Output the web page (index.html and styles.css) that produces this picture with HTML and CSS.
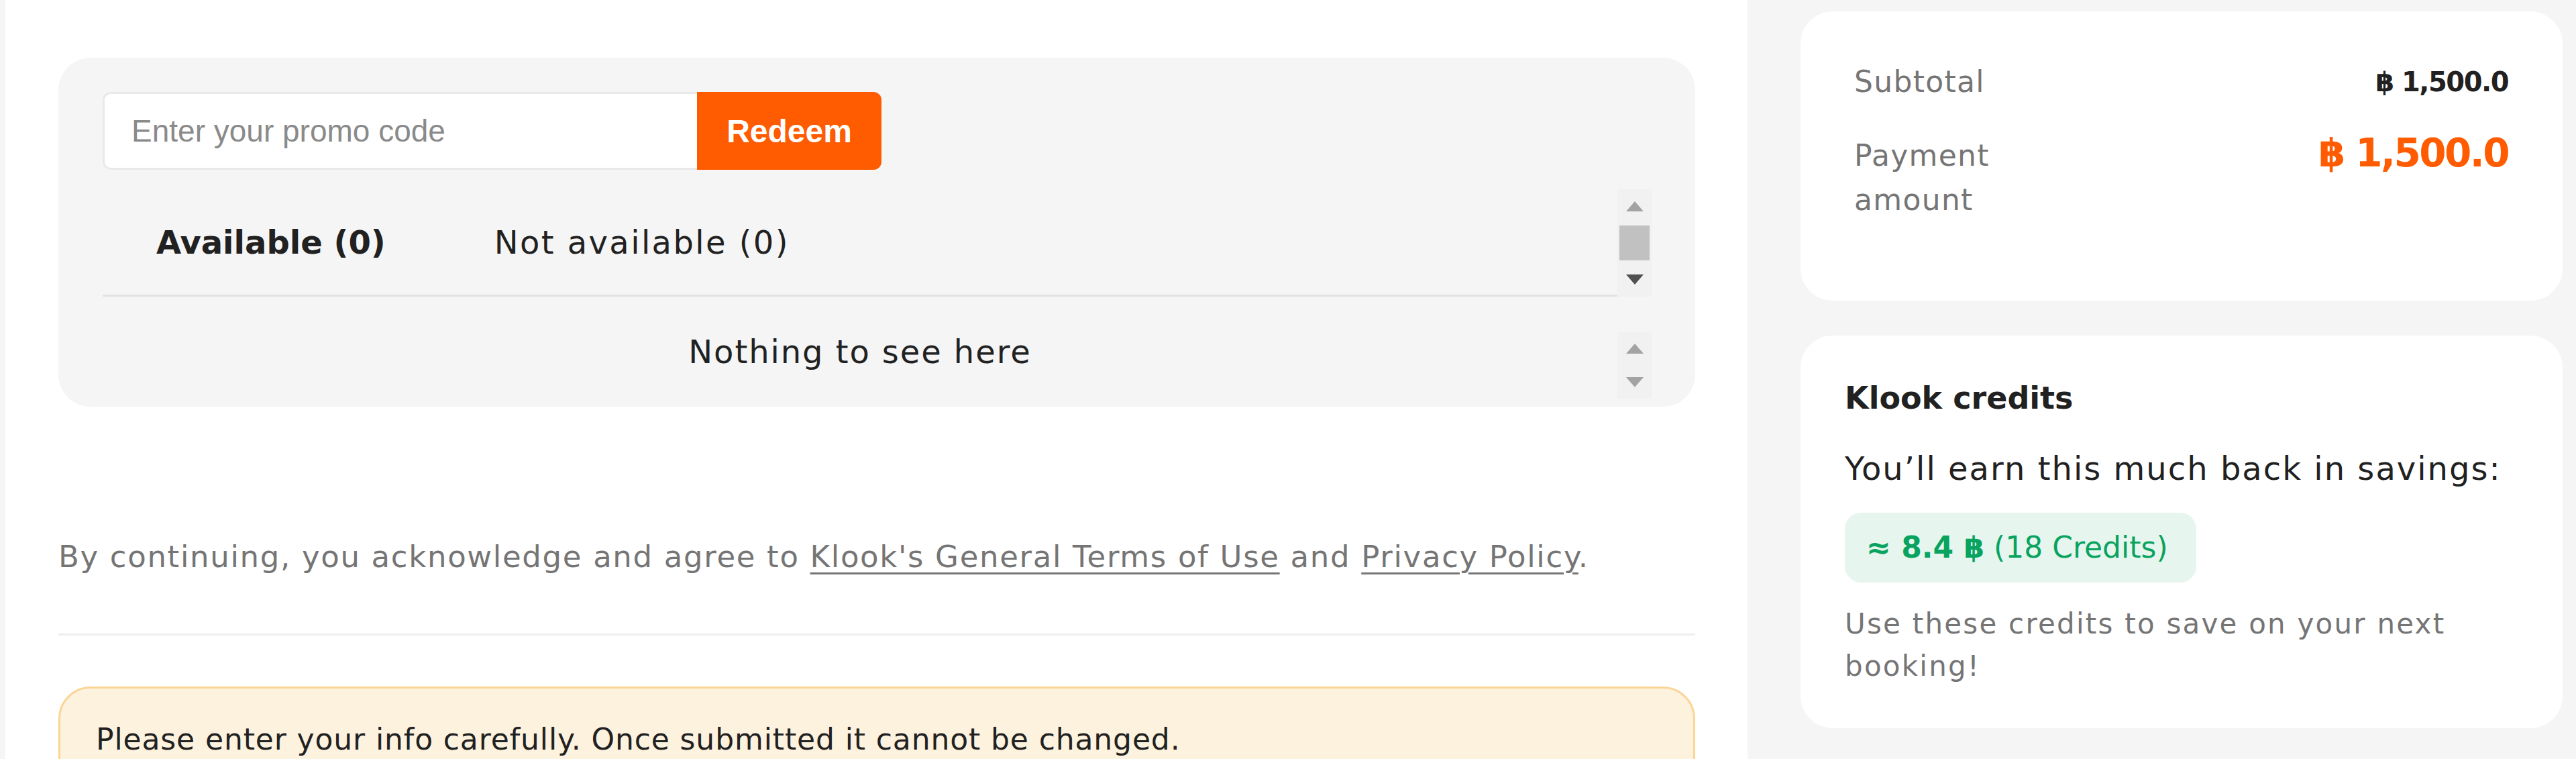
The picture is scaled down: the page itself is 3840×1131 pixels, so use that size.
FILE: index.html
```html
<!DOCTYPE html>
<html lang="en">
<head>
<meta charset="utf-8">
<title>Checkout</title>
<link rel="stylesheet" href="styles.css">
</head>
<body>
<div class="page">
  <main class="main">
    <section class="promo">
      <div class="promo-form">
        <input class="promo-input" type="text" placeholder="Enter your promo code">
        <button class="redeem" type="button">Redeem</button>
      </div>
      <div class="scrollbox tabs-box">
        <div class="tabs">
          <div class="tab tab-active">Available (0)</div>
          <div class="tab">Not available (0)</div>
        </div>
        <div class="sbar">
          <span class="sbtn"><span class="arr arr-up"></span></span>
          <span class="thumb"></span>
          <span class="sbtn"><span class="arr arr-down arr-dark"></span></span>
        </div>
      </div>
      <div class="scrollbox empty-box">
        <div class="empty">Nothing to see here</div>
        <div class="sbar">
          <span class="sbtn"><span class="arr arr-up"></span></span>
          <span class="sgap"></span>
          <span class="sbtn"><span class="arr arr-down"></span></span>
        </div>
      </div>
    </section>

    <p class="terms">By continuing, you acknowledge and agree to <a href="#" class="link">Klook's General Terms of Use</a> and <a href="#" class="link">Privacy Policy</a>.</p>

    <div class="divider"></div>

    <div class="notice">Please enter your info carefully. Once submitted it cannot be changed.</div>
  </main>

  <aside class="side">
    <div class="card price-card">
      <div class="row">
        <div class="label">Subtotal</div>
        <div class="value">฿ 1,500.0</div>
      </div>
      <div class="row row-pay">
        <div class="label label-pay">Payment amount</div>
        <div class="value value-pay">฿ 1,500.0</div>
      </div>
    </div>

    <div class="card credits-card">
      <div class="credits-title">Klook credits</div>
      <div class="credits-earn">You’ll earn this much back in savings:</div>
      <div class="pill"><span class="pill-strong">≈ 8.4 ฿</span> (18 Credits)</div>
      <div class="credits-note">Use these credits to save on your next<br>booking!</div>
    </div>
  </aside>
</div>
</body>
</html>
```

FILE: styles.css
```css
* { box-sizing: border-box; }

html, body {
  margin: 0;
  padding: 0;
}

body {
  background: #f5f5f5;
  font-family: "DejaVu Sans", "Open Sans", sans-serif;
  color: #212121;
  overflow: hidden;
}

.page {
  display: flex;
  align-items: flex-start;
  height: 1131px;
  overflow: hidden;
}

/* ---------- main column ---------- */
.main {
  margin-left: 8px;
  width: 2597px;
  min-height: 1131px;
  background: #ffffff;
  padding: 86px 78px 0 79px;
}

.promo {
  background: #f5f5f5;
  border-radius: 48px;
  padding: 51px 65px 12px 66px;
}

.promo-form {
  display: flex;
  height: 116px;
}

.promo-input {
  width: 886px;
  height: 116px;
  border: 3px solid #e9e9e9;
  border-right: none;
  border-radius: 12px 0 0 12px;
  background: #ffffff;
  padding: 0 0 0 40px;
  font-family: "Liberation Sans", Arial, sans-serif;
  font-size: 46px;
  color: #212121;
  outline: none;
}

.promo-input::placeholder {
  color: #8a8a8a;
}

.redeem {
  width: 275px;
  height: 116px;
  border: none;
  border-radius: 0 12px 12px 0;
  background: #ff5b00;
  color: #ffffff;
  font-family: "Liberation Sans", Arial, sans-serif;
  font-weight: 700;
  font-size: 48px;
  padding: 0;
}

.scrollbox {
  display: flex;
}

.tabs-box {
  margin-top: 29px;
  height: 160px;
}

.tabs {
  flex: 1;
  display: flex;
  align-items: center;
  border-bottom: 3px solid #e2e2e2;
}

.tab {
  padding: 0 82px 0 80px;
  font-size: 48px;
  letter-spacing: 0.05em;
  color: #212121;
  white-space: nowrap;
}

.tab-active {
  font-weight: 700;
  letter-spacing: 0;
}

.empty-box {
  margin-top: 52px;
  height: 100px;
}

.empty {
  flex: 1;
  text-align: center;
  font-size: 48px;
  line-height: 60px;
  letter-spacing: 0.04em;
  color: #212121;
}

/* classic scrollbar look */
.sbar {
  width: 51px;
  background: #f1f1f1;
  display: flex;
  flex-direction: column;
}

.sbtn {
  height: 51px;
  display: flex;
  align-items: center;
  justify-content: center;
}

.sgap { flex: 1; }

.thumb {
  flex: 1;
  margin: 3px 3px;
  background: #c1c1c1;
}

.arr {
  width: 0;
  height: 0;
  border-left: 13px solid transparent;
  border-right: 13px solid transparent;
}

.arr-up {
  border-bottom: 15px solid #a3a3a3;
}

.arr-down {
  border-top: 15px solid #a3a3a3;
}

.arr-dark {
  border-top-color: #505050;
}

.terms {
  margin: 192px 0 0;
  font-size: 45px;
  line-height: 63px;
  letter-spacing: 0.037em;
  color: #757575;
}

.link {
  color: #757575;
  text-decoration: underline;
  text-decoration-thickness: 3px;
  text-underline-offset: 8px;
}

.divider {
  margin-top: 83px;
  height: 3px;
  background: #eeeeee;
}

.notice {
  margin-top: 76px;
  background: #fdf2de;
  border: 3px solid #fbd596;
  border-radius: 48px;
  padding: 44px 50px 60px 53px;
  font-size: 44px;
  line-height: 63px;
  letter-spacing: 0.02em;
  color: #212121;
}

/* ---------- side column ---------- */
.side {
  flex: 1;
  padding: 17px 20px 0 79px;
  display: flex;
  flex-direction: column;
  gap: 52px;
}

.card {
  background: #ffffff;
  border-radius: 48px;
}

.price-card {
  height: 431px;
  padding: 72px 81px 0 80px;
}

.row {
  display: flex;
  justify-content: space-between;
  align-items: flex-start;
}

.label {
  font-size: 44px;
  line-height: 66px;
  letter-spacing: 0.03em;
  color: #757575;
}

.label-pay {
  width: 260px;
}

.value {
  font-size: 40px;
  line-height: 66px;
  font-weight: 700;
  letter-spacing: -1.5px;
  color: #212121;
  white-space: nowrap;
}

.row-pay {
  margin-top: 44px;
}

.value-pay {
  font-size: 58px;
  letter-spacing: -2.6px;
  color: #ff5b00;
  margin-top: -4px;
}

.credits-card {
  height: 585px;
  padding: 60px 66px 0 66px;
}

.credits-title {
  font-size: 46px;
  line-height: 66px;
  font-weight: 700;
  color: #212121;
}

.credits-earn {
  margin-top: 39px;
  font-size: 48px;
  line-height: 66px;
  letter-spacing: 0.042em;
  color: #212121;
  white-space: nowrap;
}

.pill {
  margin-top: 33px;
  display: inline-block;
  background: #e6f6ef;
  border-radius: 24px;
  padding: 19px 42px 19px 32px;
  font-size: 44px;
  line-height: 66px;
  color: #08a35f;
}

.pill-strong {
  font-weight: 700;
}

.credits-note {
  margin-top: 30px;
  font-size: 42px;
  line-height: 63px;
  letter-spacing: 0.053em;
  color: #757575;
}
```
